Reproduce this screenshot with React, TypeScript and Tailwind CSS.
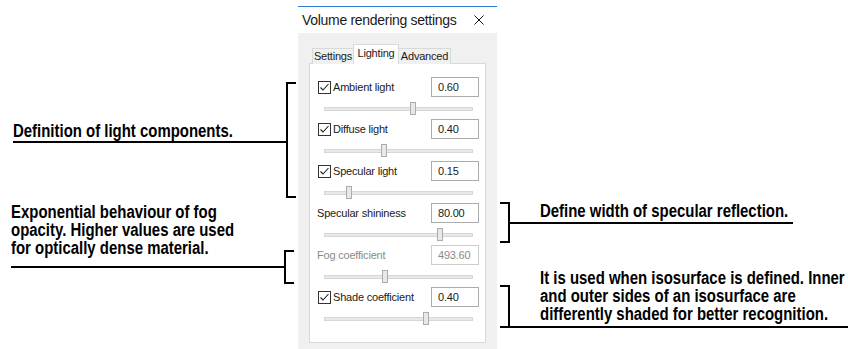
import React from 'react'

type Row = {
  label: string
  value: string
  pos: number
  check?: boolean
  disabled?: boolean
}

// Thumb positions read off the trackbars, as a fraction of the track.
const ROWS: Row[] = [
  { label: 'Ambient light', value: '0.60', pos: 0.6, check: true },
  { label: 'Diffuse light', value: '0.40', pos: 0.4, check: true },
  { label: 'Specular light', value: '0.15', pos: 0.16, check: true },
  { label: 'Specular shininess', value: '80.00', pos: 0.78 },
  { label: 'Fog coefficient', value: '493.60', pos: 0.41, disabled: true },
  { label: 'Shade coefficient', value: '0.40', pos: 0.685, check: true },
]

const NOTE =
  "font-['Liberation_Sans',sans-serif] font-bold text-[18px] leading-[18px] text-black whitespace-nowrap"

// No narrow Arial here, so the callout text is squeezed horizontally instead.
function Narrow({ children }: { children: React.ReactNode }) {
  return <span className="inline-block origin-left scale-x-[0.83]">{children}</span>
}

function CheckBox() {
  return (
    <span className="flex h-[13px] w-[13px] shrink-0 items-center justify-center border border-[#333333] bg-white">
      <svg width="11" height="11" viewBox="0 0 11 11">
        <path d="M1.5 5.5 L4 8 L9.5 2" fill="none" stroke="#202020" strokeWidth="1.1" />
      </svg>
    </span>
  )
}

function Slider({ pos }: { pos: number }) {
  return (
    <div className="h-[22px]">
      <div className="relative ml-[6px] mt-[10px] h-[4px] w-[149px] border border-[#d6d6d6] bg-[#e7eaea]">
        <span
          className="absolute top-[-6px] h-[13px] w-[6px] border border-[#acacac] bg-[#e8e8e8]"
          style={{ left: `calc(${pos * 100}% - 3px)` }}
        />
      </div>
    </div>
  )
}

function SettingRow({ row }: { row: Row }) {
  return (
    <div className="h-[42px]">
      <div className="flex h-[20px] items-center justify-between">
        {row.check ? (
          <label className="flex items-center gap-[2px] text-[#1a1a1a]">
            <CheckBox />
            <span>{row.label}</span>
          </label>
        ) : (
          <span className={`-ml-px ${row.disabled ? 'text-[#8a8a8a]' : 'text-[#1a1a1a]'}`}>
            {row.label}
          </span>
        )}
        <div
          className={`flex h-[20px] w-[48px] items-center border bg-white pl-[6px] ${
            row.disabled ? 'border-[#cccccc] text-[#8a8a8a]' : 'border-[#acacac] text-[#1a1a1a]'
          }`}
        >
          {row.value}
        </div>
      </div>
      <Slider pos={row.pos} />
    </div>
  )
}

function Dialog() {
  return (
    <div className="flex w-[199px] shrink-0 flex-col pt-[6px] font-['Liberation_Sans',sans-serif] text-[11px] tracking-[-0.2px]">
      {/* Title bar */}
      <div className="flex h-[27px] items-center justify-between border-t border-[#2c7ad6] bg-white pl-[4px] pr-[13px]">
        <span className="text-[14px] tracking-[-0.3px] text-[#1a1a1a]">Volume rendering settings</span>
        <svg width="10" height="10" viewBox="0 0 10 10">
          <path d="M0.5 0.5 L9.5 9.5 M9.5 0.5 L0.5 9.5" stroke="#111" strokeWidth="1" />
        </svg>
      </div>

      {/* Body */}
      <div className="flex-1 bg-[#f0f0f0] pl-[11px] pt-[11px]">
        <div className="ml-[3px] flex h-[20px] items-end">
          <div className="flex h-[16px] w-[41px] items-center justify-center border-l border-t border-[#d9d9d9] bg-[#f0f0f0] text-[#1a1a1a]">
            Settings
          </div>
          <div className="relative z-10 flex h-[20px] w-[46px] items-center justify-center border-x border-t border-[#d9d9d9] bg-white pb-[3px] text-[#1a1a1a]">
            Lighting
          </div>
          <div className="flex h-[16px] w-[52px] items-center justify-center border-r border-t border-[#d9d9d9] bg-[#f0f0f0] text-[#1a1a1a]">
            Advanced
          </div>
        </div>
        <div className="-mt-px h-[280px] w-[177px] border border-[#d9d9d9] bg-white pl-[8px] pr-[6px] pt-[13px]">
          {ROWS.map(r => (
            <SettingRow key={r.label} row={r} />
          ))}
        </div>
      </div>
    </div>
  )
}

export default function App() {
  return (
    <div className="flex h-[349px] w-[848px] overflow-hidden bg-white">
      {/* Left notes */}
      <div className="flex w-[298px] shrink-0 flex-col">
        <div className="mt-[82px] flex">
          <div className="ml-[13px] flex h-[61px] w-[273px] flex-col justify-end">
            <div className={`border-b-2 border-black pb-[1px] ${NOTE}`}>
              <Narrow>Definition of light components.</Narrow>
            </div>
          </div>
          <div className="h-[116px] w-[10px] border-y-2 border-l-2 border-black" />
        </div>
        <div className="mt-[2px] flex">
          <div className="ml-[11px] flex h-[68px] w-[273px] flex-col justify-end">
            <div className={`border-b-2 border-black pb-[9px] ${NOTE}`}>
              <Narrow>
                Exponential behaviour of fog
                <br />
                opacity. Higher values are used
                <br />
                for optically dense material.
              </Narrow>
            </div>
          </div>
          <div className="mt-[50px] h-[34px] w-[10px] border-y-2 border-l-2 border-black" />
        </div>
      </div>

      <Dialog />

      {/* Right notes */}
      <div className="flex min-w-0 flex-1 flex-col">
        <div className="ml-[3px] mt-[202px] flex items-start">
          <div className="h-[41px] w-[10px] border-y-2 border-r-2 border-black" />
          <div className={`h-[22px] w-[283px] border-b-2 border-black pl-[30px] ${NOTE}`}>
            <Narrow>Define width of specular reflection.</Narrow>
          </div>
        </div>
        <div className="ml-[3px] mt-[26px] flex items-end border-b-2 border-black">
          <div className="h-[41px] w-[10px] shrink-0 border-r-2 border-t-2 border-black" />
          <div className={`pb-[3px] pl-[30px] ${NOTE}`}>
            <Narrow>
              It is used when isosurface is defined. Inner
              <br />
              and outer sides of an isosurface are
              <br />
              differently shaded for better recognition.
            </Narrow>
          </div>
        </div>
      </div>
    </div>
  )
}
